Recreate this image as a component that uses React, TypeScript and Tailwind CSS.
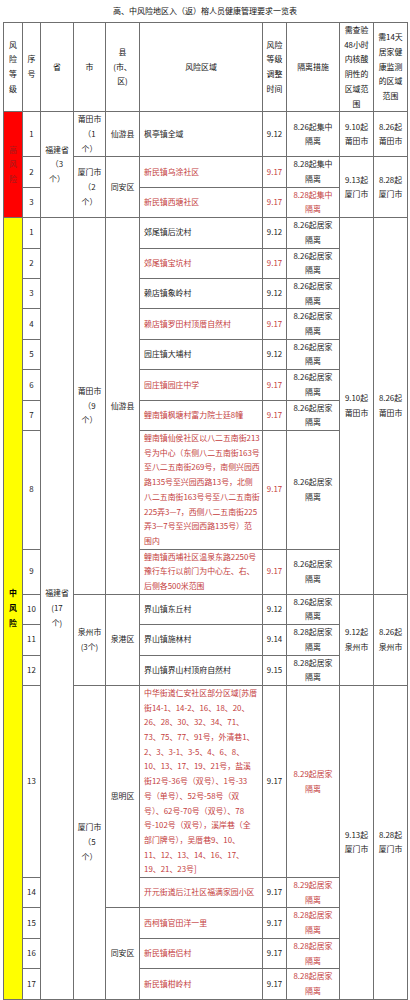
import React from "react";

type Cell = { text: React.ReactNode; span: number; className?: string };

interface Row {
  level?: Cell;
  prov?: Cell;
  city?: Cell;
  county?: Cell;
  n: string;
  area: string[];
  red?: boolean;
  time: string;
  timeRed?: boolean;
  iso: string;
  isoRed?: boolean;
  check?: Cell;
  watch?: Cell;
}

const RED = "text-[#c43c3c]";
const BD = "border border-[#6f6f6f]";

const lines = (...xs: string[]) =>
  xs.map((x, i) => (
    <React.Fragment key={i}>
      {i > 0 && <br />}
      {x}
    </React.Fragment>
  ));

const rows: Row[] = [
  {
    level: { text: lines("高", "风", "险"), span: 3, className: "bg-[#ff0000] text-[#b01818] font-medium" },
    prov: { text: lines("福建省", "（3", "个）"), span: 3 },
    city: { text: lines("莆田市", "（1", "个）"), span: 1 },
    county: { text: "仙游县", span: 1 },
    n: "1",
    area: ["枫亭镇全域"],
    time: "9.12",
    iso: "8.26起集中",
    check: { text: lines("9.10起", "莆田市"), span: 1 },
    watch: { text: lines("8.26起", "莆田市"), span: 1 },
  },
  {
    city: { text: lines("厦门市", "（2", "个）"), span: 2 },
    county: { text: "同安区", span: 2 },
    n: "2",
    area: ["新民镇乌涂社区"],
    red: true,
    time: "9.17",
    timeRed: true,
    iso: "8.28起集中",
    check: { text: lines("9.13起", "厦门市"), span: 2 },
    watch: { text: lines("8.28起", "厦门市"), span: 2 },
  },
  { n: "3", area: ["新民镇西塘社区"], red: true, time: "9.17", timeRed: true, iso: "8.28起集中", isoRed: true },
  {
    level: { text: lines("中", "风", "险"), span: 17, className: "bg-[#ffff00] text-black font-bold" },
    prov: { text: lines("福建省", "(17", "个)"), span: 17 },
    city: { text: lines("莆田市", "（9", "个）"), span: 9 },
    county: { text: "仙游县", span: 9 },
    n: "1",
    area: ["郊尾镇后沈村"],
    time: "9.12",
    iso: "8.26起居家",
    check: { text: lines("9.10起", "莆田市"), span: 9 },
    watch: { text: lines("8.26起", "莆田市"), span: 9 },
  },
  { n: "2", area: ["郊尾镇宝坑村"], red: true, time: "9.17", timeRed: true, iso: "8.26起居家" },
  { n: "3", area: ["赖店镇象岭村"], time: "9.12", iso: "8.26起居家" },
  { n: "4", area: ["赖店镇罗田村顶厝自然村"], red: true, time: "9.17", timeRed: true, iso: "8.26起居家" },
  { n: "5", area: ["园庄镇大埔村"], time: "9.12", iso: "8.26起居家" },
  { n: "6", area: ["园庄镇园庄中学"], red: true, time: "9.17", timeRed: true, iso: "8.26起居家" },
  { n: "7", area: ["鲤南镇枫塘村富力院士廷8幢"], red: true, time: "9.17", timeRed: true, iso: "8.26起居家" },
  {
    n: "8",
    area: [
      "鲤南镇仙侯社区以八二五南街213",
      "号为中心（东侧八二五南街163号",
      "至八二五南街269号，南侧兴园西",
      "路135号至兴园西路13号，北侧",
      "八二五南街163号号至八二五南街",
      "225弄3—7，西侧八二五南街225",
      "弄3—7号至兴园西路135号）范",
      "围内",
    ],
    red: true,
    time: "9.17",
    timeRed: true,
    iso: "8.26起居家",
  },
  {
    n: "9",
    area: ["鲤南镇西埔社区温泉东路2250号", "豫行车行以前门为中心左、右、", "后侧各500米范围"],
    red: true,
    time: "9.17",
    timeRed: true,
    iso: "8.26起居家",
  },
  {
    city: { text: lines("泉州市", "(3个)"), span: 3 },
    county: { text: "泉港区", span: 3 },
    n: "10",
    area: ["界山镇东丘村"],
    time: "9.12",
    iso: "8.26起居家",
    check: { text: lines("9.12起", "泉州市"), span: 3 },
    watch: { text: lines("8.26起", "泉州市"), span: 3 },
  },
  { n: "11", area: ["界山镇施林村"], time: "9.14", iso: "8.28起居家" },
  { n: "12", area: ["界山镇界山村顶府自然村"], time: "9.15", iso: "8.28起居家" },
  {
    city: { text: lines("厦门市", "（5", "个）"), span: 5 },
    county: { text: "思明区", span: 2 },
    n: "13",
    area: [
      "中华街道仁安社区部分区域[苏厝",
      "街14-1、14-2、16、18、20、",
      "26、28、30、32、34、71、",
      "73、75、77、91号，外清巷1、",
      "2、3、3-1、3-5、4、6、8、",
      "10、13、17、19、21号，盐溪",
      "街12号-36号（双号）、1号-33",
      "号（单号）、52号-58号（双",
      "号）、62号-70号（双号）、78",
      "号-102号（双号），溪岸巷（全",
      "部门牌号），吴厝巷9、10、",
      "11、12、13、14、16、17、",
      "19、21、23号]",
    ],
    red: true,
    time: "9.17",
    iso: "8.29起居家",
    isoRed: true,
    check: { text: lines("9.13起", "厦门市"), span: 5 },
    watch: { text: lines("8.28起", "厦门市"), span: 5 },
  },
  { n: "14", area: ["开元街道后江社区福满家园小区"], red: true, time: "9.17", iso: "8.29起居家", isoRed: true },
  {
    county: { text: "同安区", span: 3 },
    n: "15",
    area: ["西柯镇官田洋一里"],
    red: true,
    time: "9.17",
    iso: "8.28起居家",
    isoRed: true,
  },
  { n: "16", area: ["新民镇梧侣村"], red: true, time: "9.17", iso: "8.28起居家", isoRed: true },
  { n: "17", area: ["新民镇柑岭村"], red: true, time: "9.17", iso: "8.28起居家", isoRed: true },
];

const Span = ({ c }: { c?: Cell }) =>
  c ? (
    <td rowSpan={c.span} className={`${BD} text-center align-middle px-[1px] ${c.className ?? ""}`}>
      {c.text}
    </td>
  ) : null;

export default function App() {
  return (
    <div
      className="w-[410px] bg-white text-[#222] text-[7.9px] leading-[14.7px]"
      style={{ fontFamily: '"Noto Sans CJK SC", "Noto Sans", sans-serif' }}
    >
      <div className="h-[22px] flex items-center justify-center text-[8px] text-[#111]">
        高、中风险地区入（返）榕人员健康管理要求一览表
      </div>
      <div className="px-[3px]">
        <table className="w-[404px] table-fixed border-collapse">
          <colgroup>
            <col className="w-[19px]" />
            <col className="w-[18px]" />
            <col className="w-[33px]" />
            <col className="w-[32px]" />
            <col className="w-[34px]" />
            <col className="w-[123px]" />
            <col className="w-[24px]" />
            <col className="w-[53px]" />
            <col className="w-[34px]" />
            <col className="w-[34px]" />
          </colgroup>
          <thead>
            <tr className="text-[#111]">
              <th className={`${BD} font-normal`}>{lines("风", "险", "等", "级")}</th>
              <th className={`${BD} font-normal`}>{lines("序", "号")}</th>
              <th className={`${BD} font-normal`}>省</th>
              <th className={`${BD} font-normal`}>市</th>
              <th className={`${BD} font-normal`}>{lines("县", "(市、", "区)")}</th>
              <th className={`${BD} font-normal`}>风险区域</th>
              <th className={`${BD} font-normal`}>{lines("风险", "等级", "调整", "时间")}</th>
              <th className={`${BD} font-normal`}>隔离措施</th>
              <th className={`${BD} font-normal whitespace-nowrap`}>
                {lines("需查验", "48小时", "内核酸", "阴性的", "区域范", "围")}
              </th>
              <th className={`${BD} font-normal whitespace-nowrap`}>
                {lines("需14天", "居家健", "康监测", "的区域", "范围")}
              </th>
            </tr>
          </thead>
          <tbody>
            {rows.map((r, i) => (
              <tr key={i}>
                <Span c={r.level} />
                <td className={`${BD} text-center align-middle`}>{r.n}</td>
                <Span c={r.prov} />
                <Span c={r.city} />
                <Span c={r.county} />
                <td className={`${BD} text-left align-middle pl-[4px] whitespace-nowrap ${r.red ? RED : ""}`}>
                  {lines(...r.area)}
                </td>
                <td className={`${BD} text-center align-middle ${r.timeRed ? RED : ""}`}>{r.time}</td>
                <td className={`${BD} text-center align-middle whitespace-nowrap ${r.isoRed ? RED : ""}`}>
                  {lines(r.iso, "隔离")}
                </td>
                <Span c={r.check} />
                <Span c={r.watch} />
              </tr>
            ))}
          </tbody>
        </table>
      </div>
    </div>
  );
}
